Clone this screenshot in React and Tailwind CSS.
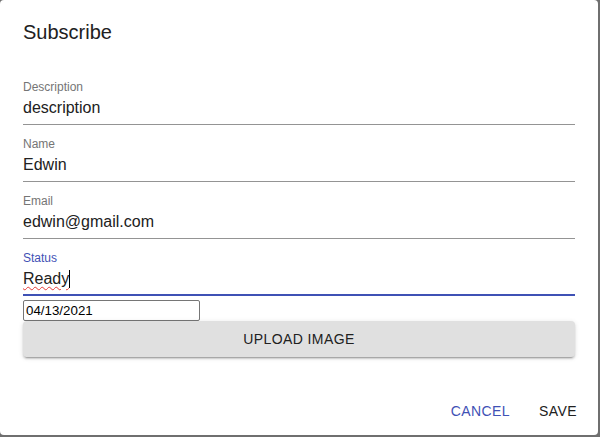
import React from 'react'

function Field({ label, value, focused, first, children }) {
  return (
    <div className={first ? '' : 'mt-[13px]'}>
      <div className={`text-[12px] leading-[12px] ${focused ? 'text-[#3f51b5]' : 'text-[#757575]'}`}>
        {label}
      </div>
      <div
        className={`mt-[5px] text-[16px] leading-[19px] text-[#212121] ${
          focused ? 'pb-[6px] border-b-2 border-[#3f51b5]' : 'pb-[7px] border-b border-[#949494]'
        }`}
      >
        {children || value}
      </div>
    </div>
  )
}

export default function App() {
  return (
    <div className="w-[600px] h-[437px] bg-[#6f6f6f] font-['Liberation_Sans',Arial,sans-serif]">
      <div className="w-[598px] h-[435px] bg-white rounded-[4px] flex flex-col">
        <div className="px-[23px] pt-4 text-[20px] leading-[32px] text-[#212121]">Subscribe</div>

        <div className="px-[23px] mt-[33px]">
          <Field first label="Description" value="description" />
          <Field label="Name" value="Edwin" />
          <Field label="Email" value="edwin@gmail.com" />
          <Field label="Status" focused>
            <span className="flex items-center">
              <span className="underline decoration-wavy decoration-[#e53935] decoration-1 underline-offset-[2px]">
                Ready
              </span>
              <span className="inline-block w-px h-[18px] bg-black" />
            </span>
          </Field>

          <input
            type="text"
            readOnly
            value="04/13/2021"
            className="mt-[4px] block w-[177px] h-[21px] border border-[#767676] rounded-[2px] px-[2px] text-[13.33px] text-black outline-none"
          />

          <button className="block w-full h-[36px] bg-[#e0e0e0] rounded-[4px] text-[14px] tracking-[0.4px] text-[#212121] shadow-[0px_3px_1px_-2px_rgba(0,0,0,0.2),0px_2px_2px_0px_rgba(0,0,0,0.14),0px_1px_5px_0px_rgba(0,0,0,0.12)]">
            UPLOAD IMAGE
          </button>
        </div>

        <div className="flex justify-end gap-2 pr-2 mt-[36px]">
          <button className="h-[36px] min-w-[64px] px-2 py-[6px] text-[14px] leading-[24px] tracking-[0.4px] text-[#3f51b5]">
            CANCEL
          </button>
          <button className="h-[36px] min-w-[64px] px-2 py-[6px] text-[14px] leading-[24px] tracking-[0.4px] text-[#212121]">
            SAVE
          </button>
        </div>
      </div>
    </div>
  )
}
